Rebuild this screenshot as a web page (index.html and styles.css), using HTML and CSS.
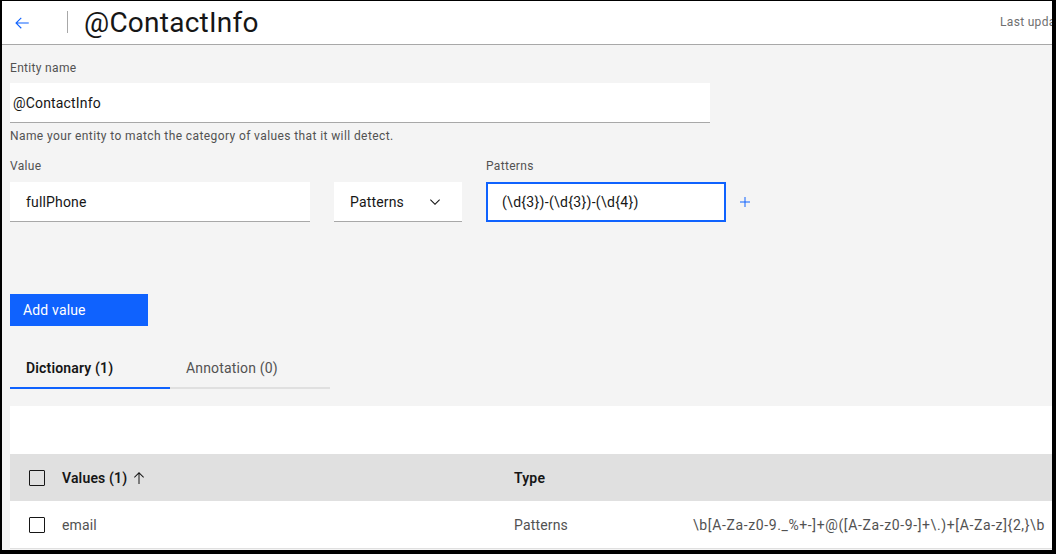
FILE: index.html
```html
<!DOCTYPE html>
<html lang="en">
<head>
<meta charset="utf-8">
<title>@ContactInfo</title>
<link rel="stylesheet" href="styles.css">
</head>
<body>
<div class="frame">
  <header class="header">
    <button class="back" aria-label="Back">
      <svg width="18" height="18" viewBox="0 0 16 16" aria-hidden="true"><path fill="#0f62fe" d="M7 3l.7.7-3.8 3.8H14v1H3.9l3.8 3.8L7 13 2 8z"/></svg>
    </button>
    <span class="divider"></span>
    <h1 class="title">@ContactInfo</h1>
    <span class="meta">Last updated: a few seconds ago</span>
  </header>
  <main class="main">
    <section class="entity">
      <div class="label">Entity name</div>
      <div class="input input-entity">@ContactInfo</div>
      <div class="helper">Name your entity to match the category of values that it will detect.</div>
    </section>
    <section class="value-row">
      <div class="field">
        <div class="label">Value</div>
        <div class="input input-value">fullPhone</div>
      </div>
      <div class="field field-gap">
        <div class="dropdown">
          <span>Patterns</span>
          <svg class="chev" width="16" height="16" viewBox="0 0 16 16" aria-hidden="true"><path fill="#161616" d="M8 11L3 6l.7-.7L8 9.6l4.3-4.3.7.7z"/></svg>
        </div>
      </div>
      <div class="field field-gap">
        <div class="label">Patterns</div>
        <div class="input input-pattern">(\d{3})-(\d{3})-(\d{4})</div>
      </div>
      <button class="add-pattern" aria-label="Add pattern">
        <svg width="16" height="16" viewBox="0 0 16 16" aria-hidden="true"><path fill="#0f62fe" d="M8.5 7.5V3h-1v4.5H3v1h4.5V13h1V8.5H13v-1z"/></svg>
      </button>
    </section>
    <button class="btn-primary">Add value</button>
    <nav class="tabs">
      <div class="tab tab-active">Dictionary (1)</div>
      <div class="tab">Annotation (0)</div>
    </nav>
    <div class="toolbar"></div>
    <div class="table">
      <div class="row row-head">
        <div class="cell cell-check"><span class="checkbox"></span></div>
        <div class="cell">Values (1)
          <svg class="sort" width="16" height="16" viewBox="0 0 16 16" aria-hidden="true"><path fill="#161616" d="M8 2L3 7l.7.7 3.8-3.8V14h1V3.9l3.8 3.8L13 7z"/></svg>
        </div>
        <div class="cell">Type</div>
        <div class="cell"></div>
      </div>
      <div class="row row-body">
        <div class="cell cell-check"><span class="checkbox"></span></div>
        <div class="cell">email</div>
        <div class="cell">Patterns</div>
        <div class="cell cell-regex">\b[A-Za-z0-9._%+-]+@([A-Za-z0-9-]+\.)+[A-Za-z]{2,}\b</div>
      </div>
    </div>
  </main>
</div>
</body>
</html>
```

FILE: styles.css
```css
* { box-sizing: border-box; }
html, body { margin: 0; padding: 0; }
body {
  font-family: Roboto, "Liberation Sans", sans-serif;
  color: #161616;
  background: #000;
}
.frame {
  width: 1056px;
  height: 554px;
  border-style: solid;
  border-color: #000;
  border-width: 1px 4px 4px 2px;
  overflow: hidden;
  background: #f4f4f4;
}
.header {
  height: 44px;
  background: #fff;
  border-bottom: 1px solid #a8a8a8;
  display: flex;
  align-items: center;
}
.back {
  border: 0;
  background: none;
  padding: 0 0 0 11px;
  margin: 0;
  display: flex;
  align-items: center;
  height: 100%;
}
.divider {
  width: 1px;
  height: 22px;
  background: #a8a8a8;
  margin-left: 36px;
  margin-top: -2px;
}
.title {
  margin: 0 0 0 16px;
  font-size: 28px;
  line-height: 36px;
  font-weight: 400;
  letter-spacing: 0.25px;
  white-space: nowrap;
}
.meta {
  margin-left: auto;
  flex: 0 0 52px;
  width: 52px;
  min-width: 0;
  white-space: nowrap;
  font-size: 12px;
  letter-spacing: 0.32px;
  color: #6f6f6f;
  margin-top: -2px;
}
.main {
  padding: 15px 0 0 8px;
}
.label {
  font-size: 12px;
  line-height: 16px;
  letter-spacing: 0.32px;
  color: #525252;
  margin-bottom: 8px;
}
.input {
  height: 40px;
  background: #fff;
  border-bottom: 1px solid #a8a8a8;
  display: flex;
  align-items: center;
  font-size: 14px;
  letter-spacing: 0.16px;
  white-space: nowrap;
}
.entity .label { margin-bottom: 7px; }
.input-entity { width: 700px; padding-left: 3px; }
.helper {
  margin-top: 5px;
  font-size: 12px;
  line-height: 16px;
  letter-spacing: 0.4px;
  color: #525252;
}
.value-row {
  margin-top: 14px;
  display: flex;
  align-items: flex-end;
}
.field { display: flex; flex-direction: column; }
.field-gap { margin-left: 24px; }
.input-value { width: 300px; padding-left: 16px; }
.dropdown {
  width: 128px;
  height: 40px;
  background: #fff;
  border-bottom: 1px solid #a8a8a8;
  display: flex;
  align-items: center;
  padding: 0 19px 0 16px;
  font-size: 14px;
  letter-spacing: 0.16px;
}
.chev { margin-left: auto; }
.input-pattern {
  width: 240px;
  border: 2px solid #0f62fe;
  padding-left: 14px;
  letter-spacing: 0.3px;
}
.add-pattern {
  border: 0;
  background: none;
  padding: 0;
  margin: 0 0 0 11px;
  height: 40px;
  display: flex;
  align-items: center;
}
.btn-primary {
  display: block;
  margin-top: 72px;
  width: 138px;
  height: 32px;
  border: 0;
  background: #0f62fe;
  color: #fff;
  font-family: inherit;
  font-size: 14px;
  letter-spacing: 0.16px;
  text-align: left;
  padding: 0 0 0 13px;
}
.tabs {
  margin-top: 23px;
  display: flex;
}
.tab {
  width: 160px;
  height: 40px;
  line-height: 38px;
  padding-left: 16px;
  font-size: 14px;
  letter-spacing: 0.16px;
  color: #525252;
  border-bottom: 2px solid #e0e0e0;
}
.tab-active {
  color: #161616;
  font-weight: 600;
  border-bottom-color: #0f62fe;
}
.toolbar {
  margin-top: 17px;
  height: 48px;
  background: #fff;
  width: 1200px;
}
.table { width: 1200px; }
.row {
  display: grid;
  grid-template-columns: 52px 452px 179px 1fr;
  align-items: center;
  font-size: 14px;
  letter-spacing: 0.16px;
}
.row-head {
  height: 47px;
  background: #e0e0e0;
  font-weight: 600;
  color: #161616;
}
.row-body {
  height: 48px;
  background: #fff;
  border-bottom: 1px solid #e0e0e0;
  color: #525252;
}
.cell {
  white-space: nowrap;
  display: flex;
  align-items: center;
}
.row-body .cell { padding-top: 1px; }
.cell-regex { letter-spacing: 0.62px; }
.cell-check { padding-left: 19px; }
.checkbox {
  width: 16px;
  height: 16px;
  border: 1px solid #161616;
  border-radius: 1px;
  background: #fff;
}
.row-head .checkbox { background: transparent; }
.sort { margin-left: 4px; }
```
